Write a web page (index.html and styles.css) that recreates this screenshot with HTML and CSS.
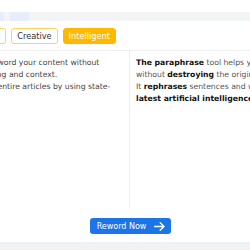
FILE: index.html
```html
<!DOCTYPE html>
<html lang="en">
<head>
    <meta charset="UTF-8">
    <meta name="viewport" content="width=device-width, initial-scale=1.0">
    <title>Paraphrasing Tool</title>
    <link rel="stylesheet" href="styles.css">
</head>
<body>
    <div class="page">
        <div class="tabbar">
            <span class="tab tab-a"></span>
            <span class="tab tab-b"></span>
        </div>
        <div class="modes">
            <button class="mode">Standard</button>
            <button class="mode">Creative</button>
            <button class="mode active">Intelligent</button>
        </div>
        <div class="editor">
            <div class="pane pane-left">
                <p>Our tools can reword your content without<br>losing its meaning and context.<br>You can rewrite entire articles by using state-</p>
            </div>
            <div class="pane pane-right">
                <p><b>The paraphrase</b> tool helps you rewrite content<br>without <b>destroying</b> the original meaning.<br>It <b>rephrases</b> sentences and words with the<br><b>latest artificial intelligence</b> technology.</p>
            </div>
        </div>
        <div class="actions">
            <button class="reword">Reword Now
                <svg width="11" height="9" viewBox="0 0 11 9"><path d="M0.5 4.5H10M6.2 0.8L10 4.5L6.2 8.2" fill="none" stroke="white" stroke-width="1.4" stroke-linecap="round" stroke-linejoin="round"/></svg>
            </button>
        </div>
        <div class="footer-band"></div>
    </div>
</body>
</html>
```

FILE: styles.css
```css
body {
    margin: 0;
    width: 250px;
    height: 250px;
    overflow: hidden;
    background: #fff;
    font-family: "DejaVu Sans", "Noto Sans", sans-serif;
    color: #333;
}
.page {
    display: flex;
    flex-direction: column;
    padding-top: 12px;
}
.tabbar {
    display: flex;
    height: 9px;
    background: #f3f4f6;
}
.tab {
    display: block;
    background: #e7edfb;
}
.tab-a {
    width: 4px;
}
.tab-b {
    width: 19px;
    margin-left: 6px;
}
.modes {
    display: flex;
    gap: 5px;
    margin-top: 7px;
    margin-left: -43px;
    padding-bottom: 6px;
    border-bottom: 1px solid #f0f0f0;
}
.mode {
    flex-shrink: 0;
    height: 16px;
    margin: 0;
    padding: 0 5px;
    border: 1px solid #ffd25e;
    border-radius: 3px;
    background: #fff;
    color: #333;
    font-family: inherit;
    font-size: 8.2px;
    cursor: pointer;
}
.mode.active {
    background: #ffb800;
    border-color: #ffb800;
    color: #fff;
}
.editor {
    display: flex;
    height: 157px;
}
.pane p {
    margin: 0;
    font-size: 7.7px;
    line-height: 12px;
    white-space: nowrap;
}
.pane-left {
    width: 194px;
    flex-shrink: 0;
    margin-left: -64px;
    padding-top: 6px;
    border-right: 1px solid #eeeeee;
    box-sizing: border-box;
    color: #444;
}
.pane-right {
    width: 200px;
    flex-shrink: 0;
    padding: 6px 0 0 6px;
    color: #555;
}
.pane-right b {
    color: #111;
}
.actions {
    display: flex;
    justify-content: center;
    padding: 10px 0 8px 11px;
}
.reword {
    display: flex;
    align-items: center;
    gap: 8px;
    height: 16px;
    padding: 0 6px 0 7px;
    background: #1b74e8;
    border: none;
    border-radius: 3px;
    color: #fff;
    font-family: inherit;
    font-size: 8px;
}
.footer-band {
    height: 8px;
    background: #f1f2f4;
}
```
